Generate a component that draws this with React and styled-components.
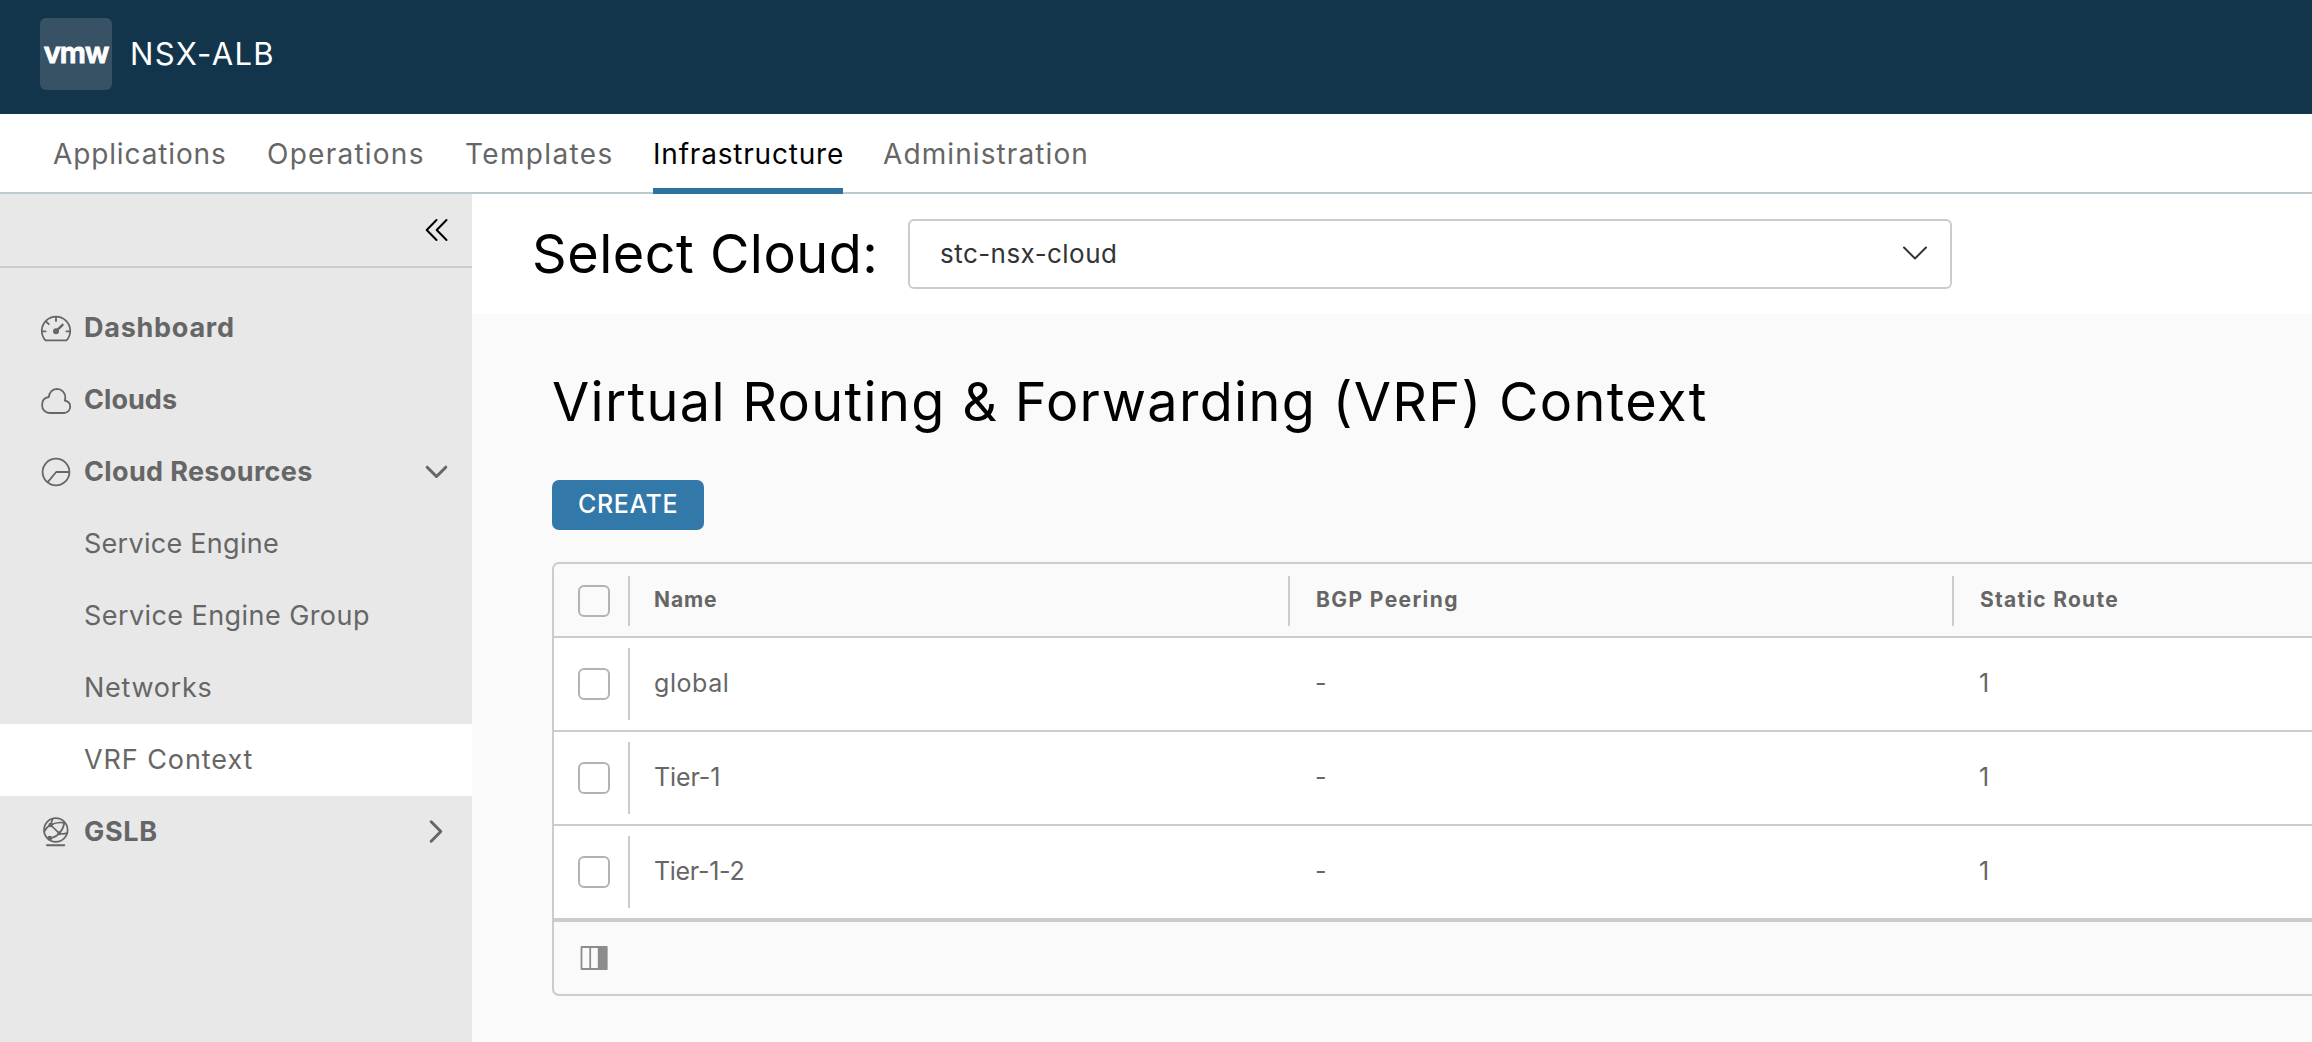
import React from 'react';
import styled, { createGlobalStyle } from 'styled-components';

const GlobalStyle = createGlobalStyle`
  *, *::before, *::after { box-sizing: border-box; }
  html, body { margin: 0; height: 100%; }
  body {
    font-family: Inter, 'Open Sans', sans-serif;
    color: #666;
    background: #fafafa;
    overflow: hidden;
  }
`;

const Page = styled.div`
  display: flex;
  flex-direction: column;
  height: 1042px;
  overflow: hidden;
`;

const Label = styled.span`
  display: block;
  white-space: nowrap;
  letter-spacing: ${p => p.$track || 0}px;
`;

const Header = styled.header`
  display: flex;
  align-items: flex-start;
  gap: 18px;
  height: 114px;
  flex: none;
  padding: 18px 40px;
  background: #13354b;
  color: #fff;
`;

const Logo = styled.div`
  display: flex;
  justify-content: center;
  width: 72px;
  height: 72px;
  border-radius: 6px;
  background: #385265;
  font-size: 29px;
  font-weight: 600;
  line-height: 69px;
  letter-spacing: -1px;
  -webkit-text-stroke: 1px #fff;
`;

const Product = styled.h1`
  margin: 0;
  font-size: 31px;
  font-weight: 400;
  line-height: 72px;
`;

const Nav = styled.nav`
  display: flex;
  gap: 40px;
  height: 80px;
  flex: none;
  padding-left: 53px;
  background: #fff;
  border-bottom: 2px solid #becbce;
`;

const NavItem = styled.a`
  width: ${p => p.$width}px;
  height: 80px;
  font-size: 28px;
  font-weight: 400;
  line-height: 80px;
  color: ${p => (p.$active ? '#000' : '#666')};
  border-bottom: 6px solid ${p => (p.$active ? '#2e70a0' : 'transparent')};
`;

const Body = styled.div`
  display: flex;
  flex: 1;
  min-height: 0;
`;

const Sidebar = styled.aside`
  width: 472px;
  flex: none;
  background: #e8e8e8;
`;

const Collapse = styled.div`
  display: flex;
  justify-content: flex-end;
  height: 74px;
  padding: 23px 23px 0 0;
  border-bottom: 2px solid #ccc;
`;

const Menu = styled.div`
  padding-top: 24px;
`;

const MenuItem = styled.div`
  display: flex;
  align-items: center;
  height: 72px;
  padding: 0 21px 0 ${p => (p.$child ? 84 : 38)}px;
  background: ${p => (p.$active ? '#fff' : 'transparent')};
  font-size: 27px;
  font-weight: ${p => (p.$child ? 400 : 650)};
  line-height: 72px;
`;

const IconSlot = styled.span`
  display: flex;
  width: 46px;
  flex: none;
`;

const Caret = styled.span`
  display: flex;
  margin-left: auto;
`;

const Main = styled.main`
  flex: 1;
  min-width: 0;
  background: #fafafa;
`;

const CloudBar = styled.div`
  display: flex;
  align-items: flex-start;
  height: 120px;
  padding: 25px 0 0 60px;
  background: #fff;
`;

const CloudLabel = styled.div`
  width: 376px;
  font-size: 54px;
  font-weight: 400;
  line-height: 69px;
  color: #000;
`;

const Select = styled.div`
  display: flex;
  align-items: center;
  justify-content: space-between;
  width: 1044px;
  height: 70px;
  padding: 0 22px 0 30px;
  border: 2px solid #ccc;
  border-radius: 6px;
  color: #333;
  font-size: 26px;
  font-weight: 400;
  line-height: 66px;
`;

const Content = styled.section`
  padding: 54px 0 0 80px;
`;

const Title = styled.h2`
  margin: 0;
  font-size: 54px;
  font-weight: 400;
  line-height: 68px;
  color: #000;
`;

const CreateButton = styled.button`
  display: block;
  width: 152px;
  height: 50px;
  margin: 44px 0 32px;
  padding: 0 0 2px 26px;
  border: 0;
  border-radius: 7px;
  background: #3278a9;
  color: #fff;
  font-family: inherit;
  font-size: 25px;
  font-weight: 550;
  line-height: 48px;
  text-align: left;
`;

const Table = styled.div`
  width: 1900px;
  height: 434px;
  border: 2px solid #ccc;
  border-radius: 7px;
  overflow: hidden;
`;

const TableRow = styled.div`
  display: grid;
  grid-template-columns: 76px 660px 664px 1fr;
  height: ${p => (p.$head ? 74 : 94)}px;
  padding: ${p => (p.$head ? '12px 0 10px' : '10px 0')};
  background: ${p => (p.$head ? 'transparent' : '#fff')};
  border-bottom: 2px solid #ccc;
  font-size: ${p => (p.$head ? 21 : 25)}px;
  font-weight: ${p => (p.$head ? 650 : 400)};
`;

const CheckCell = styled.div`
  padding: ${p => (p.$head ? 9 : 20)}px 0 0 24px;
  border-right: 2px solid #ccc;
  width: 76px;
`;

const Checkbox = styled.span`
  display: block;
  width: 32px;
  height: 32px;
  border: 2px solid #b3b3b3;
  border-radius: 6px;
`;

const Cell = styled.div`
  padding-left: ${p => p.$pad}px;
  line-height: ${p => (p.$head ? 47 : 71)}px;
  border-right: ${p => (p.$divider ? '2px solid #ccc' : '0')};
`;

const TableFooter = styled.div`
  display: flex;
  align-items: flex-start;
  height: 74px;
  padding: 24px 26px;
  border-top: 2px solid #ccc;
`;

const Svg = ({ w, h, sw = 2, color = '#666', children }) => (
  <svg width={w} height={h} viewBox={`0 0 ${w} ${h}`} fill="none" stroke={color}
    strokeWidth={sw} strokeLinecap="round" strokeLinejoin="round">{children}</svg>
);

const CollapseIcon = () => (
  <Svg w={24} h={26} color="#000"><path d="M11.5 3 1.7 13l9.8 10M21.5 3l-9.8 10 9.8 10" /></Svg>
);

const GaugeIcon = () => (
  <Svg w={36} h={36} sw={1.8}>
    <path d="M7.5 30.4h21A14.2 14.2 0 1 0 7.5 30.4Z" />
    <path d="M18 7v4M4.6 21.4h3M28.4 21.4h3M8.6 12l2.2 2.2" />
    <path d="m18 21.2 6.6-6.4" strokeWidth="2.3" />
    <circle cx="18" cy="21.3" r="2.1" fill="#666" />
  </Svg>
);

const CloudIcon = () => (
  <Svg w={36} h={36} sw={1.8}>
    <path d="M11.5 31H26a6.3 6.3 0 0 0 6.2-6.3c0-3.2-2.4-5.6-5.4-6.2.3-1 .5-2 .5-3A8.5 8.5 0 0 0 18.8 6.8a8.4 8.4 0 0 0-7.9 8.2c-4.3.5-6.8 3.7-6.8 7.9 0 4.7 3.2 8.1 7.4 8.1Z" />
  </Svg>
);

const ResourcesIcon = () => (
  <Svg w={36} h={36} sw={1.8}>
    <circle cx="18" cy="18" r="13.4" />
    <path d="M31 18H18.2L9.7 28.2" />
  </Svg>
);

const GlobeIcon = () => (
  <Svg w={36} h={36} sw={1.7}>
    <circle cx="17.8" cy="16" r="11.8" />
    <path d="M9 31.3h17.2" strokeWidth="2" />
    <path d="M6.4 17.5c1.2-3 3.4-5.2 6.3-6.5 4-2.2 9-2.9 13.4-2.2M12.7 11l8.6 8.3M14.5 5l-1.8 6M26.3 8.8c-.6 4-2.4 7.6-5 10.5-2.6 2.7-6 4.4-9.6 5M21.3 19.3c2.6.8 5.4.7 8-.3" />
    <circle cx="12.7" cy="11" r="1.5" fill="#666" />
    <circle cx="21.3" cy="19.3" r="1.2" fill="#666" />
    <circle cx="11.7" cy="24.2" r="1.6" fill="#666" />
  </Svg>
);

const CaretDown = () => (
  <Svg w={30} h={30} sw={3}><path d="m6.2 10.2 9.3 9.3 9.3-9.3" /></Svg>
);

const CaretRight = () => (
  <Svg w={30} h={30} sw={3}><path d="m10.2 4.8 9.6 9.7-9.6 9.7" /></Svg>
);

const SelectCaret = () => (
  <Svg w={26} h={16} color="#333"><path d="m2 1.5 11 11 11-11" /></Svg>
);

const ColumnsIcon = () => (
  <Svg w={28} h={26} color="#8c8c8c" sw={1.8}>
    <rect x="1.5" y="1" width="25" height="22" />
    <path d="M10.2 1v22" />
    <path d="M18.7 1h7.8v22h-7.8Z" fill="#8c8c8c" />
  </Svg>
);

const tabs = [
  { text: 'Applications', width: 174, track: 0.87 },
  { text: 'Operations', width: 158, track: 1.25 },
  { text: 'Templates', width: 148, track: 1.35 },
  { text: 'Infrastructure', width: 190, track: 0.8, active: true },
  { text: 'Administration', width: 204, track: 1.1 },
];

const menu = [
  { text: 'Dashboard', track: 0.75, icon: <GaugeIcon /> },
  { text: 'Clouds', track: 0.05, icon: <CloudIcon /> },
  { text: 'Cloud Resources', track: 0.35, icon: <ResourcesIcon />, caret: <CaretDown /> },
  { text: 'Service Engine', track: 0.28, child: true },
  { text: 'Service Engine Group', track: 0.43, child: true },
  { text: 'Networks', track: 0.7, child: true },
  { text: 'VRF Context', track: 0.92, child: true, active: true },
  { text: 'GSLB', track: 0.7, icon: <GlobeIcon />, caret: <CaretRight /> },
];

const rows = [
  { name: 'global', track: 0.55, bgp: '-', routes: '1' },
  { name: 'Tier-1', track: -0.1, bgp: '-', routes: '1' },
  { name: 'Tier-1-2', track: -0.3, bgp: '-', routes: '1' },
];

export default function App() {
  return (
    <Page>
      <GlobalStyle />
      <Header>
        <Logo>vmw</Logo>
        <Product><Label $track={1.35}>NSX-ALB</Label></Product>
      </Header>
      <Nav>
        {tabs.map(t => (
          <NavItem key={t.text} $width={t.width} $active={t.active}>
            <Label $track={t.track}>{t.text}</Label>
          </NavItem>
        ))}
      </Nav>
      <Body>
        <Sidebar>
          <Collapse><CollapseIcon /></Collapse>
          <Menu>
            {menu.map(m => (
              <MenuItem key={m.text} $child={m.child} $active={m.active}>
                {m.icon && <IconSlot>{m.icon}</IconSlot>}
                <Label $track={m.track}>{m.text}</Label>
                {m.caret && <Caret>{m.caret}</Caret>}
              </MenuItem>
            ))}
          </Menu>
        </Sidebar>
        <Main>
          <CloudBar>
            <CloudLabel><Label $track={0.5}>Select Cloud:</Label></CloudLabel>
            <Select>
              <Label $track={0.45}>stc-nsx-cloud</Label>
              <SelectCaret />
            </Select>
          </CloudBar>
          <Content>
            <Title><Label $track={1.33}>Virtual Routing &amp; Forwarding (VRF) Context</Label></Title>
            <CreateButton><Label $track={0.6}>CREATE</Label></CreateButton>
            <Table>
              <TableRow $head>
                <CheckCell $head><Checkbox /></CheckCell>
                <Cell $head $pad={24} $divider><Label $track={0.9}>Name</Label></Cell>
                <Cell $head $pad={26} $divider><Label $track={1.4}>BGP Peering</Label></Cell>
                <Cell $head $pad={26}><Label $track={1.25}>Static Route</Label></Cell>
              </TableRow>
              {rows.map(r => (
                <TableRow key={r.name}>
                  <CheckCell><Checkbox /></CheckCell>
                  <Cell $pad={24}><Label $track={r.track}>{r.name}</Label></Cell>
                  <Cell $pad={25}>{r.bgp}</Cell>
                  <Cell $pad={25}>{r.routes}</Cell>
                </TableRow>
              ))}
              <TableFooter><ColumnsIcon /></TableFooter>
            </Table>
          </Content>
        </Main>
      </Body>
    </Page>
  );
}
